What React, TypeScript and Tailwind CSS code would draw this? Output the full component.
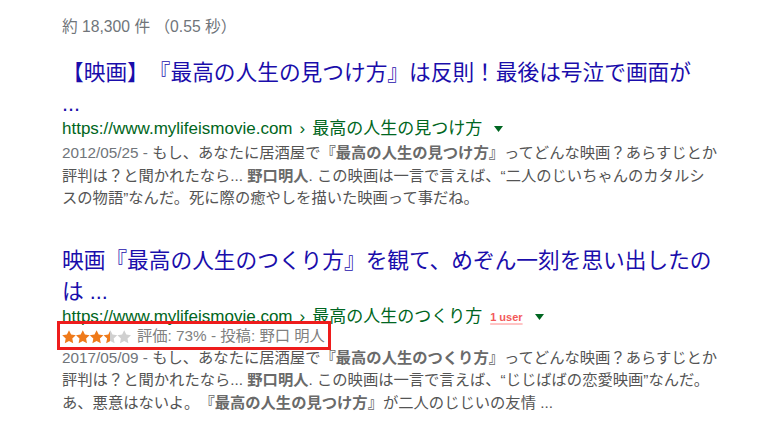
import React from "react"

const font = "font-['Liberation_Sans','Noto_Sans_CJK_JP',sans-serif] [text-spacing-trim:space-all]"

function Caret() {
  return (
    <svg width="9" height="6" viewBox="0 0 9 6" className="ml-[12px] inline-block">
      <path d="M0 0 L9 0 L4.5 6 Z" fill="#006621" />
    </svg>
  )
}

const starPath =
  "M7 0.3 L9.1 4.6 L13.8 5.2 L10.3 8.4 L11.2 13.2 L7 10.9 L2.8 13.2 L3.7 8.4 L0.2 5.2 L4.9 4.6 Z"

function Stars({ value }: { value: number }) {
  return (
    <svg width="70" height="14" viewBox="0 0 70 14">
      <defs>
        <linearGradient id="half">
          <stop offset="50%" stopColor="#ef7a1a" />
          <stop offset="50%" stopColor="#d0d0d0" />
        </linearGradient>
      </defs>
      {[0, 1, 2, 3, 4].map((i) => {
        const fill = value >= i + 1 ? "#ef7a1a" : value > i ? "url(#half)" : "#d0d0d0"
        return <path key={i} d={starPath} fill={fill} transform={`translate(${i * 13.8} 0)`} />
      })}
    </svg>
  )
}

function Url({ path }: { path: string }) {
  return (
    <>
      https://www.mylifeismovie.com<span className="px-[7px]">›</span>
      {path}
    </>
  )
}

export default function App() {
  return (
    <div className={`${font} w-[768px] h-[441px] bg-white pl-[62px] pt-[16px] overflow-hidden`}>
      <div className="text-[15.7px] leading-[22px] text-[#70757a]">約 18,300 件 （0.55 秒）</div>

      {/* result 1 */}
      <div className="mt-[19px]">
        <h3 className="text-[21.7px] leading-[31px] text-[#1a0dab] whitespace-nowrap">
          【映画】『最高の人生の見つけ方』は反則！最後は号泣で画面が
          <br />
          ...
        </h3>
        <div className="flex items-center text-[17px] leading-[20px] text-[#006621] whitespace-nowrap">
          <Url path="最高の人生の見つけ方" />
          <Caret />
        </div>
        <p className="mt-[3px] text-[15.3px] leading-[22.5px] text-[#545454] whitespace-nowrap">
          <span className="text-[#70757a]">2012/05/25 - </span>もし、あなたに居酒屋で
          <b className="text-[#6a6a6a]">『最高の人生の見つけ方』</b>ってどんな映画？あらすじとか
          <br />
          評判は？と聞かれたなら... <b className="text-[#6a6a6a]">野口明人</b>. この映画は一言で言えば、“二人のじいちゃんのカタルシ
          <br />
          スの物語”なんだ。死に際の癒やしを描いた映画って事だね。
        </p>
      </div>

      {/* result 2 */}
      <div className="mt-[35px]">
        <h3 className="text-[21.7px] leading-[31px] text-[#1a0dab] whitespace-nowrap">
          映画『最高の人生のつくり方』を観て、めぞん一刻を思い出したの
          <br />
          は ...
        </h3>
        <div className="flex items-center text-[17px] leading-[20px] text-[#006621] whitespace-nowrap">
          <Url path="最高の人生のつくり方" />
          <span className="ml-[8px] text-[11px] font-bold text-[#f35a5a] underline decoration-[#ffc4c4] decoration-2 underline-offset-2">
            1 user
          </span>
          <Caret />
        </div>
        <div className="relative flex items-center gap-[5px] h-[20px] text-[15.3px] text-[#808080] whitespace-nowrap">
          <Stars value={3.5} />
          <span>評価: 73% - 投稿: 野口 明人</span>
          <div className="absolute left-[-5px] top-[-6px] w-[274px] h-[29px] border-[3px] border-[#ee1c1c]" />
        </div>
        <p className="text-[15.3px] leading-[22.5px] text-[#545454] whitespace-nowrap">
          <span className="text-[#70757a]">2017/05/09 - </span>もし、あなたに居酒屋で
          <b className="text-[#6a6a6a]">『最高の人生のつくり方』</b>ってどんな映画？あらすじとか
          <br />
          評判は？と聞かれたなら... <b className="text-[#6a6a6a]">野口明人</b>. この映画は一言で言えば、“じじばばの恋愛映画”なんだ。
          <br />
          あ、悪意はないよ。<b className="text-[#6a6a6a]">『最高の人生の見つけ方』</b>が二人のじじいの友情 ...
        </p>
      </div>
    </div>
  )
}
